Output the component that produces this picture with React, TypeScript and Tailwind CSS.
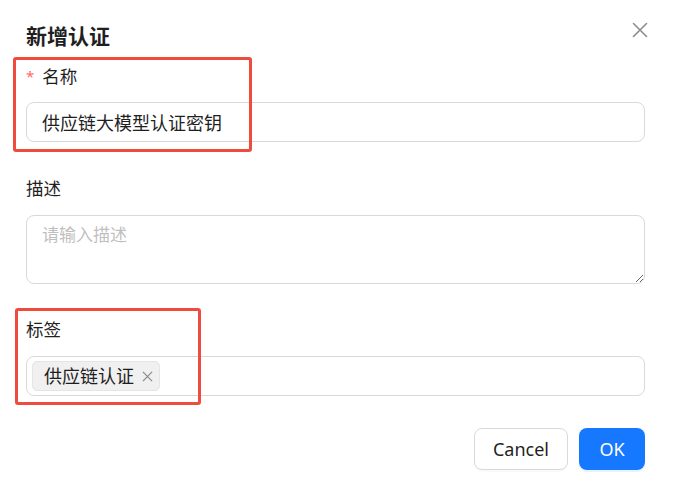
import React, { useState } from 'react';

const font = { fontFamily: '"Noto Sans", "Noto Sans CJK SC", sans-serif' };

const App: React.FC = () => {
  const [name, setName] = useState('供应链大模型认证密钥');
  const [desc, setDesc] = useState('');
  const [tags, setTags] = useState<string[]>(['供应链认证']);

  return (
    <div className="relative w-[673px] h-[490px] bg-white text-[#1f1f1f]" style={font}>
      <div className="flex flex-col pt-[22px] pl-[26px] pr-[28px]">
        {/* Header */}
        <h2 className="h-[28px] leading-[28px] text-[21px] font-bold mb-[11px]">新增认证</h2>
        <button className="absolute top-[22px] right-[25px] w-[16px] h-[16px] text-[#8c8c8c]">
          <svg viewBox="0 0 16 16" className="w-[16px] h-[16px]" fill="none" stroke="currentColor" strokeWidth="1.6" strokeLinecap="round">
            <path d="M1.5 1.5 L14.5 14.5 M14.5 1.5 L1.5 14.5" />
          </svg>
        </button>

        {/* 名称 */}
        <label className="flex items-center h-[30px] text-[17.5px] mb-[11px]">
          <span className="text-[#ff6b6e] text-[15px] mr-[8px] leading-none">*</span>
          名称
        </label>
        <input
          value={name}
          onChange={(e) => setName(e.target.value)}
          className="h-[40px] w-full rounded-[8px] border border-[#d9d9d9] px-[15px] text-[18px] text-[#1f1f1f] outline-none"
        />

        {/* 描述 */}
        <label className="flex items-center h-[30px] text-[17.5px] mt-[31px] mb-[12px]">描述</label>
        <textarea
          value={desc}
          onChange={(e) => setDesc(e.target.value)}
          placeholder="请输入描述"
          className="h-[69px] w-full rounded-[8px] border border-[#d9d9d9] px-[15px] py-[6px] text-[17px] leading-[26px] outline-none resize-y placeholder:text-[#bfbfbf]"
        />

        {/* 标签 */}
        <label className="flex items-center h-[30px] text-[17.5px] mt-[30px] mb-[12px]">标签</label>
        <div className="h-[40px] w-full rounded-[8px] border border-[#d9d9d9] flex items-center px-[5px]">
          {tags.map((t) => (
            <span
              key={t}
              className="flex items-center h-[30px] rounded-[5px] border border-[#e5e5e5] bg-[#f0f0f0] pl-[11px] pr-[6px] text-[18px]"
            >
              {t}
              <button
                onClick={() => setTags(tags.filter((x) => x !== t))}
                className="ml-[8px] w-[11px] h-[11px] text-[#8c8c8c]"
              >
                <svg viewBox="0 0 12 12" className="w-[11px] h-[11px]" fill="none" stroke="currentColor" strokeWidth="1.4">
                  <path d="M1 1 L11 11 M11 1 L1 11" />
                </svg>
              </button>
            </span>
          ))}
        </div>

        {/* Footer */}
        <div className="flex justify-end gap-[11px] mt-[32px]">
          <button className="h-[42px] w-[94px] rounded-[8px] border border-[#d9d9d9] bg-white text-[18px] text-[#1f1f1f] shadow-[0_2px_0_rgba(0,0,0,0.02)]">
            Cancel
          </button>
          <button className="h-[42px] w-[66px] rounded-[8px] bg-[#1677ff] text-[18px] text-white shadow-[0_2px_0_rgba(5,145,255,0.1)]">
            OK
          </button>
        </div>
      </div>

      {/* annotation boxes */}
      <div className="absolute left-[13px] top-[57px] w-[239px] h-[95px] border-[3px] border-[#ef4b3f] rounded-[3px] pointer-events-none" />
      <div className="absolute left-[15px] top-[308px] w-[186px] h-[97px] border-[3px] border-[#ef4b3f] rounded-[3px] pointer-events-none" />
    </div>
  );
};

export default App;
